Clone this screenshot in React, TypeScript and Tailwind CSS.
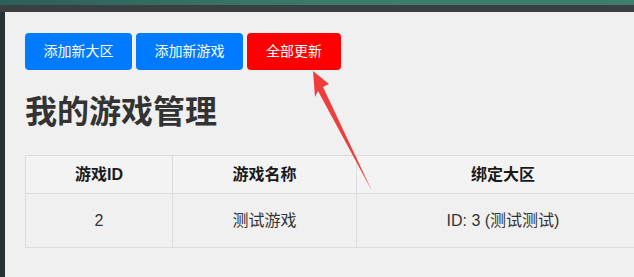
export default function App() {
  return (
    <div className="relative h-[277px] w-[634px] overflow-hidden bg-[#2a3336] font-['Liberation_Sans','Noto_Sans_CJK_SC',sans-serif]">
      {/* window chrome */}
      <div className="h-[5px] bg-gradient-to-r from-[#2c5f58] via-[#3c7a6c] to-[#3f7d6e]" />
      <div className="h-[7px] bg-[#3b3f41]" />
      <div className="flex h-[265px]">
        <div className="w-[5px] shrink-0 bg-[#263236]" />
        <div className="flex-1 overflow-hidden bg-[#f0f0f0] pl-[20px] pt-[21px]">
          <div className="flex gap-1">
            <button className="h-[37px] w-[107px] rounded-[4px] bg-[#007bff] text-[14px] text-white">添加新大区</button>
            <button className="h-[37px] w-[107px] rounded-[4px] bg-[#007bff] text-[14px] text-white">添加新游戏</button>
            <button className="h-[37px] w-[94px] rounded-[4px] bg-[#ff0000] text-[14px] text-white">全部更新</button>
          </div>
          <h1 className="mt-[23px] text-[32px] font-bold leading-[38px] text-[#333]">我的游戏管理</h1>
          <table className="mt-[24px] w-[625px] border-collapse text-[16px]">
            <thead>
              <tr className="h-[38px] bg-[#f3f3f3]">
                <th className="w-[147px] border border-[#dcdcdc] font-bold text-[#1a1a1a]">游戏ID</th>
                <th className="w-[184px] border border-[#dcdcdc] font-bold text-[#1a1a1a]">游戏名称</th>
                <th className="border border-[#dcdcdc] font-bold text-[#1a1a1a]">绑定大区</th>
              </tr>
            </thead>
            <tbody>
              <tr className="h-[54px] bg-[#f0f0f0]">
                <td className="border border-[#dcdcdc] text-center text-[#333]">2</td>
                <td className="border border-[#dcdcdc] text-center text-[#333]">测试游戏</td>
                <td className="border border-[#dcdcdc] text-center text-[#333]">ID: 3 (测试测试)</td>
              </tr>
            </tbody>
          </table>
        </div>
      </div>
      {/* annotation arrow */}
      <svg className="pointer-events-none absolute left-0 top-0" width="634" height="277" viewBox="0 0 634 277">
        <polygon points="313,71 329,84 323,87 372,191 318,91 315,97" fill="#ef3d3d" />
      </svg>
    </div>
  )
}
